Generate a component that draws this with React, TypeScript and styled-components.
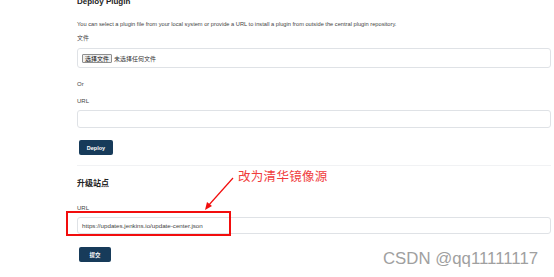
import React from 'react';
import styled, { createGlobalStyle } from 'styled-components';

const GlobalStyle = createGlobalStyle`
  html, body {
    margin: 0;
    padding: 0;
    background: #ffffff;
  }
  body {
    font-family: 'Liberation Sans', Arial, 'Noto Sans CJK SC', sans-serif;
    color: #333;
  }
`;

const Page = styled.div`
  position: relative;
  width: 554px;
  height: 277px;
  overflow: hidden;
  background: #fff;
`;

const Content = styled.div`
  display: flex;
  flex-direction: column;
  align-items: stretch;
  padding: 0 3px 0 77px;
  margin-top: -3px;
`;

const Heading = styled.div<{ $top?: number }>`
  margin-top: ${(p) => p.$top || 0}px;
  font-size: 8px;
  line-height: 10px;
  font-weight: bold;
  color: #222;
`;

const Text = styled.div<{ $top?: number; $size?: number }>`
  margin-top: ${(p) => p.$top || 0}px;
  font-size: ${(p) => p.$size || 6}px;
  line-height: 8px;
  color: #444;
  white-space: nowrap;
`;

const InputBox = styled.div<{ $top?: number; $h: number }>`
  margin-top: ${(p) => p.$top || 0}px;
  height: ${(p) => p.$h}px;
  box-sizing: border-box;
  border: 1px solid #dfe2e6;
  border-radius: 3px;
  display: flex;
  align-items: center;
  padding-left: 4px;
  gap: 2px;
  font-size: 6px;
  color: #333;
`;

const InputValue = styled.span`
  font-size: 6.2px;
  color: #444;
`;

const FileButton = styled.span`
  display: inline-flex;
  align-items: center;
  height: 9px;
  padding: 0 2px;
  box-sizing: border-box;
  background: #efefef;
  border: 1px solid #8f8f8f;
  border-radius: 1px;
  font-size: 6px;
  color: #111;
`;

const Button = styled.div<{ $top?: number; $w: number }>`
  margin-top: ${(p) => p.$top || 0}px;
  margin-left: 2px;
  width: ${(p) => p.$w}px;
  height: 15px;
  border-radius: 2px;
  background: #173b5a;
  color: #fff;
  font-size: 5.5px;
  font-weight: bold;
  display: flex;
  align-items: center;
  justify-content: center;
`;

const Divider = styled.div<{ $top?: number }>`
  margin-top: ${(p) => p.$top || 0}px;
  height: 1px;
  background: #f1f2f4;
`;

const RedBox = styled.div`
  position: absolute;
  left: 66px;
  top: 211px;
  width: 165px;
  height: 25px;
  box-sizing: border-box;
  border: 2px solid #f20d0d;
`;

const Note = styled.div`
  position: absolute;
  left: 238px;
  top: 167px;
  font-size: 12.5px;
  line-height: 18px;
  color: #f03c3c;
  font-family: 'Noto Sans CJK SC', sans-serif;
  letter-spacing: 0.3px;
`;

const Arrow = styled.svg`
  position: absolute;
  left: 200px;
  top: 175px;
`;

const Watermark = styled.div`
  position: absolute;
  left: 383px;
  top: 250px;
  font-size: 16.8px;
  line-height: 18px;
  color: #a0a0a0;
  font-family: 'Liberation Sans', Arial, sans-serif;
`;

export default function App() {
  return (
    <Page>
      <GlobalStyle />
      <Content>
        <Heading>Deploy Plugin</Heading>
        <Text $top={13} $size={5.7}>
          You can select a plugin file from your local system or provide a URL to install a plugin from outside the central plugin repository.
        </Text>
        <Text $top={6}>文件</Text>
        <InputBox $top={6} $h={20}>
          <FileButton>选择文件</FileButton>
          <span>未选择任何文件</span>
        </InputBox>
        <Text $top={12}>Or</Text>
        <Text $top={9}>URL</Text>
        <InputBox $top={5} $h={18} />
        <Button $top={12} $w={34}>Deploy</Button>
        <Divider $top={10} />
        <Heading $top={13}>升级站点</Heading>
        <Text $top={15}>URL</Text>
        <InputBox $top={5} $h={17}>
          <InputValue>https://updates.jenkins.io/update-center.json</InputValue>
        </InputBox>
        <Button $top={13} $w={32}>提交</Button>
      </Content>
      <RedBox />
      <Arrow width="40" height="40" viewBox="0 0 40 40">
        <line x1="33" y1="3" x2="8" y2="31" stroke="#f20d0d" strokeWidth="1.2" />
        <polygon points="5,35 7,27 12,31" fill="#f20d0d" />
      </Arrow>
      <Note>改为清华镜像源</Note>
      <Watermark>CSDN @qq11111117</Watermark>
    </Page>
  );
}
